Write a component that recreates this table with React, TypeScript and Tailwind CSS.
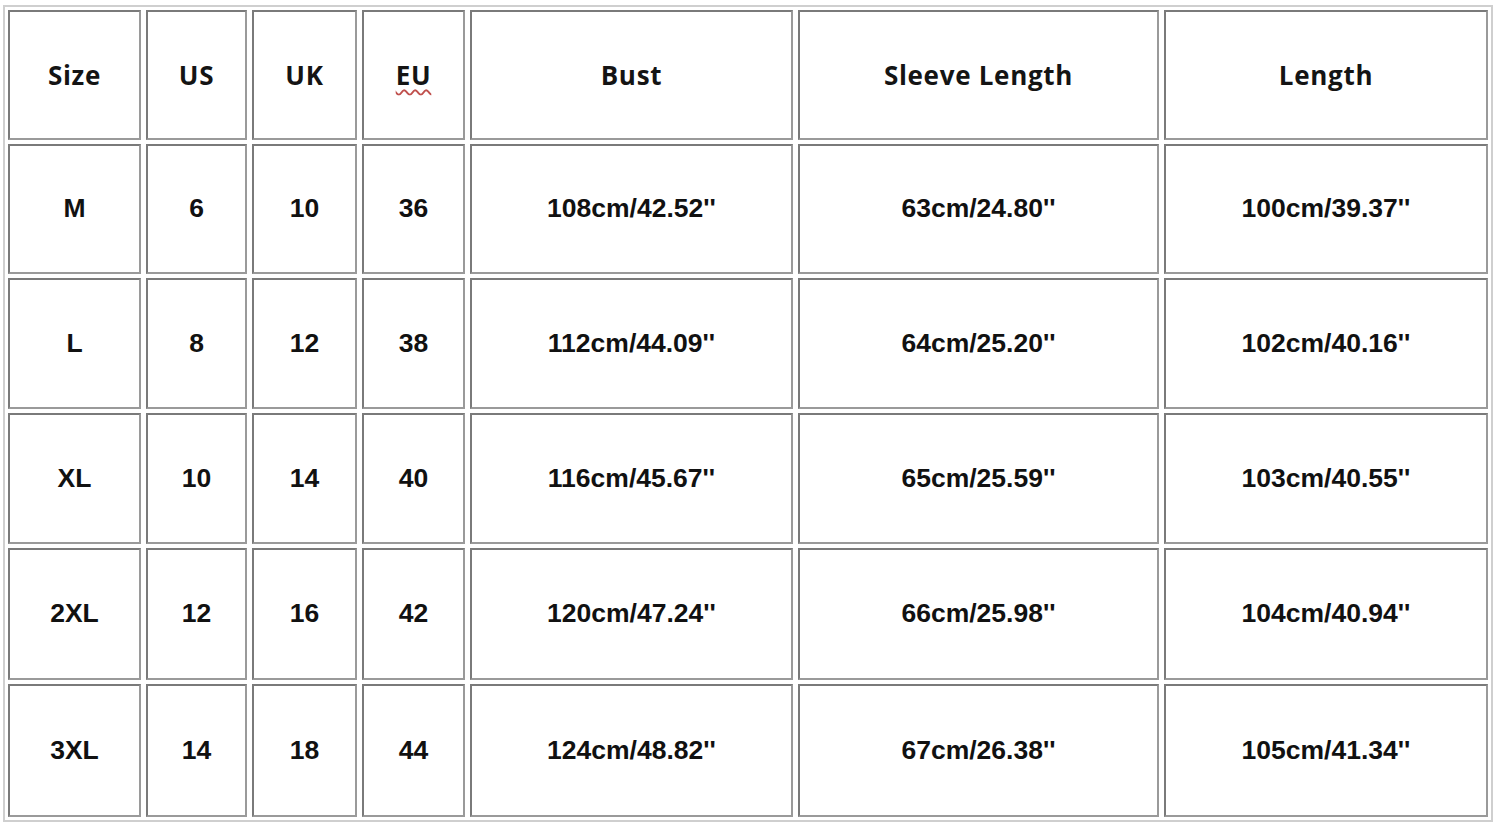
const headers = ['Size', 'US', 'UK', 'EU', 'Bust', 'Sleeve Length', 'Length'];

const rows = [
  ['M', '6', '10', '36', '108cm/42.52\'\'', '63cm/24.80\'\'', '100cm/39.37\'\''],
  ['L', '8', '12', '38', '112cm/44.09\'\'', '64cm/25.20\'\'', '102cm/40.16\'\''],
  ['XL', '10', '14', '40', '116cm/45.67\'\'', '65cm/25.59\'\'', '103cm/40.55\'\''],
  ['2XL', '12', '16', '42', '120cm/47.24\'\'', '66cm/25.98\'\'', '104cm/40.94\'\''],
  ['3XL', '14', '18', '44', '124cm/48.82\'\'', '67cm/26.38\'\'', '105cm/41.34\'\''],
];

const cell =
  'flex items-center justify-center border-2 border-t-[#7a7a7a] border-l-[#7a7a7a] border-b-[#9a9a9a] border-r-[#9a9a9a] bg-white';

export default function App() {
  return (
    <div className="w-[1500px] h-[826px] bg-white overflow-hidden">
      <div className="ml-[3px] mt-[5px] w-[1490px] border-2 border-[#cfcfcf] p-[3px]">
        <div className="grid grid-cols-[133px_101px_105px_103px_323px_361px_324px] grid-rows-[130px_130px_131px_131px_132px_133px] gap-x-[5px] gap-y-[4px]">
          {headers.map((h) => (
            <div key={h} className={cell}>
              <span
                className={`text-[26px] font-bold text-[#141414] tracking-[0.7px] ${
                  h === 'EU' ? 'underline decoration-wavy decoration-[#c0504d] decoration-[1.5px] underline-offset-[4px]' : ''
                }`}
                style={{ fontFamily: '"Open Sans", "Noto Sans", sans-serif' }}
              >
                {h}
              </span>
            </div>
          ))}
          {rows.map((r) =>
            r.map((v, i) => (
              <div key={r[0] + i} className={cell}>
                <span
                  className="text-[26.5px] font-bold text-[#111]"
                  style={{ fontFamily: '"Liberation Sans", Arial, sans-serif' }}
                >
                  {v}
                </span>
              </div>
            ))
          )}
        </div>
      </div>
    </div>
  );
}
